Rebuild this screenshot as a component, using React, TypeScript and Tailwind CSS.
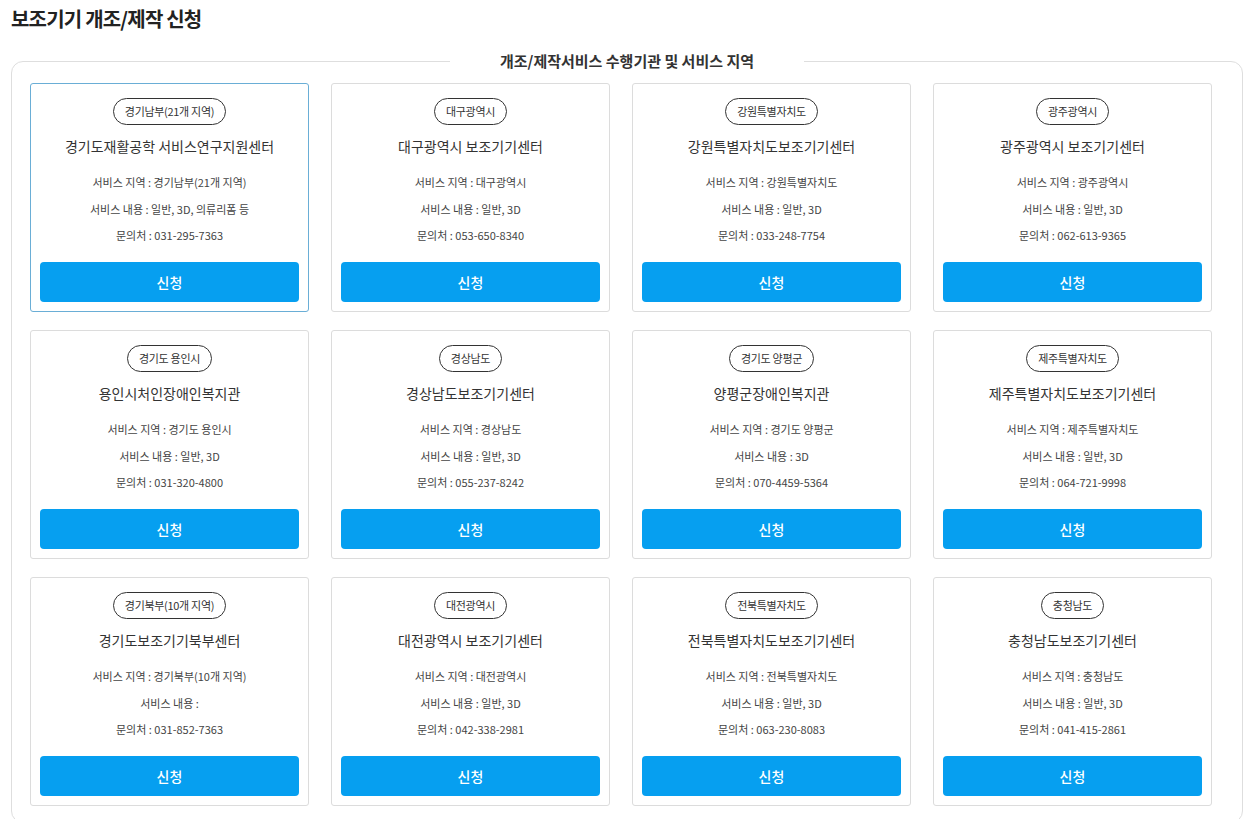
import React from "react"

type Center = {
  region: string
  name: string
  area: string
  service: string
  phone: string
}

const centers: Center[] = [
  { region: "경기남부(21개 지역)", name: "경기도재활공학 서비스연구지원센터", area: "경기남부(21개 지역)", service: "일반, 3D, 의류리폼 등", phone: "031-295-7363" },
  { region: "대구광역시", name: "대구광역시 보조기기센터", area: "대구광역시", service: "일반, 3D", phone: "053-650-8340" },
  { region: "강원특별자치도", name: "강원특별자치도보조기기센터", area: "강원특별자치도", service: "일반, 3D", phone: "033-248-7754" },
  { region: "광주광역시", name: "광주광역시 보조기기센터", area: "광주광역시", service: "일반, 3D", phone: "062-613-9365" },
  { region: "경기도 용인시", name: "용인시처인장애인복지관", area: "경기도 용인시", service: "일반, 3D", phone: "031-320-4800" },
  { region: "경상남도", name: "경상남도보조기기센터", area: "경상남도", service: "일반, 3D", phone: "055-237-8242" },
  { region: "경기도 양평군", name: "양평군장애인복지관", area: "경기도 양평군", service: "3D", phone: "070-4459-5364" },
  { region: "제주특별자치도", name: "제주특별자치도보조기기센터", area: "제주특별자치도", service: "일반, 3D", phone: "064-721-9998" },
  { region: "경기북부(10개 지역)", name: "경기도보조기기북부센터", area: "경기북부(10개 지역)", service: "", phone: "031-852-7363" },
  { region: "대전광역시", name: "대전광역시 보조기기센터", area: "대전광역시", service: "일반, 3D", phone: "042-338-2981" },
  { region: "전북특별자치도", name: "전북특별자치도보조기기센터", area: "전북특별자치도", service: "일반, 3D", phone: "063-230-8083" },
  { region: "충청남도", name: "충청남도보조기기센터", area: "충청남도", service: "일반, 3D", phone: "041-415-2861" },
]

const CenterCard = ({ c, active }: { c: Center; active?: boolean }) => {
  return (
    <div
      className={
        active
          ? "w-[279px] h-[229px] flex flex-col items-center border border-[#6aaed6] rounded-[3px] px-[9px] pt-[14px] pb-[9px]"
          : "w-[279px] h-[229px] flex flex-col items-center border border-[#dcdcdc] rounded-[3px] px-[9px] pt-[14px] pb-[9px]"
      }
    >
      {/* region badge */}
      <span className="h-[27px] px-[11px] flex items-center border border-[#333] rounded-full text-[11px] text-[#333] leading-none tracking-[-0.3px]">
        {c.region}
      </span>
      <p className="mt-[11px] text-[14px] leading-[20px] text-[#333]">{c.name}</p>
      <div className="mt-[13px] flex flex-col items-center text-[11px] leading-[26.5px] text-[#444]">
        <p>서비스 지역 : {c.area}</p>
        <p>서비스 내용 : {c.service}</p>
        <p>문의처 : {c.phone}</p>
      </div>
      <button className="mt-auto w-full h-[40px] rounded-[4px] bg-[#069ff0] text-white text-[14px] font-medium">
        신청
      </button>
    </div>
  )
}

export default function App() {
  return (
    <div className="bg-white min-h-screen pt-[5px] pl-[11px] pr-[10px] font-['Noto_Sans_CJK_KR','Noto_Sans',sans-serif]">
      <h1 className="text-[20px] leading-[28px] font-bold text-[#222] tracking-[-0.8px]">보조기기 개조/제작 신청</h1>

      <fieldset className="mt-[17px] border border-[#dedede] rounded-[12px] pl-[18px] pr-[18px] pb-[16px]">
        <legend className="mx-auto px-[50px] text-[15px] leading-[22px] font-bold text-[#333]">
          개조/제작서비스 수행기관 및 서비스 지역
        </legend>
        <div className="pt-[11px] flex flex-wrap gap-x-[22px] gap-y-[18px]">
          {centers.map((c, i) => (
            <CenterCard key={i} c={c} active={i === 0} />
          ))}
        </div>
      </fieldset>
    </div>
  )
}
